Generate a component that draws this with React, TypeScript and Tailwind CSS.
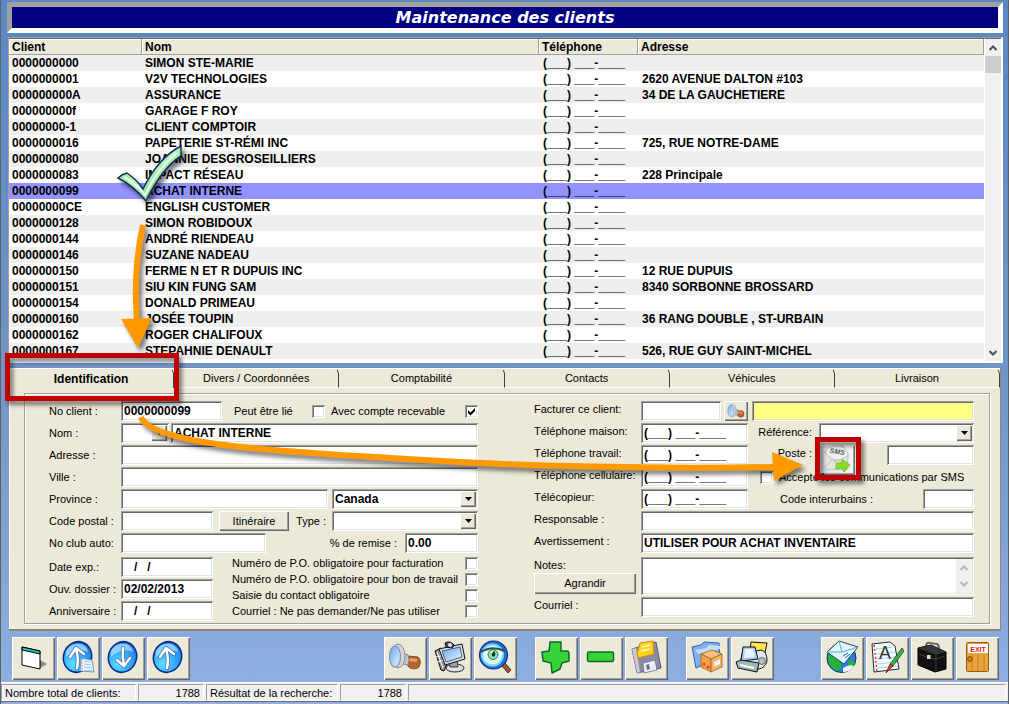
import { ReactNode } from "react";
import clsx from "clsx";

const clients = [
  ["0000000000", "SIMON STE-MARIE", ""],
  ["0000000001", "V2V TECHNOLOGIES", "2620 AVENUE DALTON #103"],
  ["000000000A", "ASSURANCE", "34 DE LA GAUCHETIERE"],
  ["000000000f", "GARAGE F ROY", ""],
  ["00000000-1", "CLIENT COMPTOIR", ""],
  ["0000000016", "PAPETERIE ST-RÉMI INC", "725, RUE NOTRE-DAME"],
  ["0000000080", "JOANNIE DESGROSEILLIERS", ""],
  ["0000000083", "IMPACT RÉSEAU", "228 Principale"],
  ["0000000099", "ACHAT INTERNE", ""],
  ["00000000CE", "ENGLISH CUSTOMER", ""],
  ["0000000128", "SIMON ROBIDOUX", ""],
  ["0000000144", "ANDRÉ RIENDEAU", ""],
  ["0000000146", "SUZANE NADEAU", ""],
  ["0000000150", "FERME N ET R DUPUIS INC", "12 RUE DUPUIS"],
  ["0000000151", "SIU KIN FUNG SAM", "8340 SORBONNE BROSSARD"],
  ["0000000154", "DONALD PRIMEAU", ""],
  ["0000000160", "JOSÉE TOUPIN", "36 RANG DOUBLE , ST-URBAIN"],
  ["0000000162", "ROGER CHALIFOUX", ""],
  ["0000000167", "STEPAHNIE DENAULT", "526, RUE GUY SAINT-MICHEL"],
];

const EMPTY_PHONE = "(___) ___-____";

const tabs = ["Identification", "Divers / Coordonnées", "Comptabilité", "Contacts", "Véhicules", "Livraison"];

const sunken =
  "shadow-[inset_1px_1px_0_#a0a0a0,inset_-1px_-1px_0_#fff,inset_2px_2px_0_#696969,inset_-2px_-2px_0_#e3e3e3]";
const bevel = "shadow-[inset_1px_1px_0_#fff,inset_-1px_-1px_0_#696969,inset_-2px_-2px_0_#a0a0a0]";
const raised = clsx("bg-[#ece9d8]", bevel);

/* ---------- form controls ---------- */

const Row = ({ children }: { children: ReactNode }) => <div className="flex h-[22px] items-start">{children}</div>;

const LeftLabel = ({ id, children }: { id: string; children: ReactNode }) => (
  <label htmlFor={id} className="w-[72px] shrink-0 whitespace-nowrap leading-5">
    {children}
  </label>
);

const RightLabel = ({ id, children }: { id: string; children: ReactNode }) => (
  <label htmlFor={id} className="w-[107px] shrink-0 whitespace-nowrap leading-4">
    {children}
  </label>
);

const TextBox = ({ id, value = "", label, className }: { id: string; value?: string; label?: string; className?: string }) => (
  <input
    id={id}
    type="text"
    aria-label={label}
    defaultValue={value}
    className={clsx("h-5 min-w-0 px-[3px] text-xs font-bold outline-none", sunken, className)}
  />
);

const SelectBox = ({ id, value = "", label, className }: { id: string; value?: string; label?: string; className?: string }) => (
  <div className={clsx("relative h-5 bg-white", sunken, className)}>
    <select
      id={id}
      aria-label={label}
      defaultValue={value}
      className="h-5 w-full appearance-none bg-transparent pl-[3px] pr-5 text-xs font-bold outline-none"
    >
      <option value={value}>{value}</option>
    </select>
    <span className={clsx("pointer-events-none absolute right-0.5 top-0.5 flex h-4 w-4 items-center justify-center", raised)}>
      <svg width="7" height="4" viewBox="0 0 7 4" aria-hidden="true">
        <path d="M0 0H7L3.5 4Z" fill="#000" />
      </svg>
    </span>
  </div>
);

const CheckBox = ({ id, checked = false, label }: { id: string; checked?: boolean; label?: string }) => (
  <span className="relative block h-[13px] w-[13px] shrink-0">
    <input
      id={id}
      type="checkbox"
      aria-label={label}
      defaultChecked={checked}
      className={clsx("peer block h-[13px] w-[13px] appearance-none bg-white", sunken)}
    />
    <svg
      viewBox="0 0 13 13"
      className="pointer-events-none absolute inset-0 hidden h-[13px] w-[13px] peer-checked:block"
      aria-hidden="true"
    >
      <path d="M3 5L5.5 7.5L10 3V6L5.5 10.5L3 8Z" fill="#000" />
    </svg>
  </span>
);

/* ---------- toolbar icons, drawn on the 43px button face ---------- */

const IconWindow = () => (
  <>
    <path d="M28 23L35 27L28 31Z" fill="#8d8a80" />
    <path d="M10 10L28 14V32L10 28Z" fill="#fff" stroke="#000" />
    <path d="M10 10L28 14V17L10 13Z" fill="#18c4c4" stroke="#000" />
  </>
);

const Ball = () => (
  <>
    <ellipse cx="20.500" cy="20" rx="14" ry="15.500" fill="url(#ball)" stroke="#0b2a86" strokeWidth="1.500" transform="rotate(20 20.500 20)" />
    <path d="M9 14Q14 5 24 7Q30 9 31 15Q20 10 9 20Z" fill="#b6e6ff" opacity=".7" />
  </>
);

const Arrow = ({ d }: { d: string }) => (
  <g fill="none" strokeLinecap="round" strokeLinejoin="round">
    <path d={d} stroke="#4a6fae" strokeWidth="4" />
    <path d={d} stroke="#fff" strokeWidth="2.500" />
  </g>
);

const IconUp = () => (
  <>
    <Ball />
    <Arrow d="M20 31Q22 22 19 12M13 20L19 11L27 17" />
  </>
);

const IconDown = () => (
  <>
    <Ball />
    <Arrow d="M21 11Q20 20 22 28M15 23L22 29L28 21" />
  </>
);

const IconUpList = () => (
  <>
    <IconUp />
    <path d="M24 21L35 23L37 35L23 34Z" fill="#eef8ff" stroke="#5a7fb4" strokeWidth=".8" />
    <path d="M27 24L34 25M27 27L34 28M27 30L35 31M27 33L35 33.500" stroke="#9cc3e4" />
    <path d="M25 22V33" stroke="#e0506a" strokeDasharray="1.500 1.500" />
  </>
);

const IconSearch = () => (
  <>
    <path d="M24 19L34 20Q38 24 35 30Q32 33 26 31L22 27Z" fill="#b5652a" stroke="#6e3713" strokeWidth=".8" />
    <path d="M26 21L33 22Q34 24 32 25L25 24Z" fill="#e3a065" />
    <path d="M18 16L24 18Q26 23 24 28L19 27Z" fill="#c3c5cc" stroke="#777a86" strokeWidth=".8" />
    <ellipse cx="14" cy="19" rx="7" ry="12" fill="#d3d5dd" stroke="#777b8c" strokeWidth=".8" />
    <ellipse cx="11" cy="19.500" rx="5.500" ry="10.500" fill="url(#lens)" stroke="#8a93ac" strokeWidth="1.200" />
  </>
);

const IconMonitor = () => (
  <>
    <ellipse cx="26" cy="31" rx="9" ry="4" fill="#dfe3e8" stroke="#222" />
    <path d="M20 25L28 23L29 30H21Z" fill="#9ca2ac" stroke="#222" strokeWidth=".8" />
    <path d="M6 14L12 11L18 27L15 34L12 33Z" fill="#8f959f" stroke="#111" />
    <path d="M8 15L14 31M7 20L12 19M9 25L14 23" stroke="#fff" />
    <path d="M10 12L33 7L36 22L16 28Z" fill="#d8dce2" stroke="#111" />
    <path d="M13 14L31 10L33 20L17 25Z" fill="url(#lens)" stroke="#33405c" strokeWidth=".8" />
    <path d="M16 6Q21 3 25 8L23 11L17 10Z" fill="#4a4f59" stroke="#111" />
    <circle cx="21" cy="8" r="2" fill="#dfe6ef" />
  </>
);

const IconEye = () => (
  <>
    <path d="M27 28L31 26L37 33L34 36Z" fill="#9a5b34" stroke="#3f1d0b" strokeWidth=".8" />
    <circle cx="19.500" cy="18" r="14" fill="#1f6fd8" stroke="#0a3390" strokeWidth="1.200" />
    <circle cx="18.500" cy="18" r="10.500" fill="#d8f7fb" stroke="#7ed6ee" strokeWidth="2" />
    <path d="M7 15Q18 8 31 14" fill="none" stroke="#3a4a4a" strokeWidth="2" />
    <path d="M9 17Q18 10 29 16Q20 27 9 17Z" fill="#fff" />
    <circle cx="19" cy="17.500" r="5" fill="#8fe0a4" stroke="#1b7a50" />
    <ellipse cx="19.500" cy="17" rx="1.800" ry="2.800" fill="#0a3b2b" />
    <circle cx="18" cy="15" r="1" fill="#fff" />
  </>
);

const IconAdd = () => (
  <path
    d="M15 5H26V14H33L34 16V24L27 26L25 32L17 36L16 26L8 24L7 15L14 14Z"
    fill="#3ad13a"
    stroke="#0b6e26"
    strokeWidth="1.500"
    strokeLinejoin="round"
  />
);

const IconRemove = () => (
  <rect x="7.500" y="15" width="26" height="9.500" rx="1.500" fill="#3ad13a" stroke="#0b6e26" strokeWidth="1.500" />
);

const IconSave = () => (
  <>
    <path d="M7 12L31 5L36 31L12 36Z" fill="#8c8ba6" stroke="#5b5a78" />
    <path d="M7 12L11 11L15 35L12 36Z" fill="#c9c9da" />
    <path d="M15 6L28 4L29 17L13 21L12 17Z" fill="#ffd21f" stroke="#d08c00" />
    <path d="M17 10L25 8M16 14L25 12" stroke="#fff6bf" strokeWidth="1.500" />
    <path d="M18 26L30 23L32 33L19 36Z" fill="#eef0f8" stroke="#6d6c88" strokeWidth=".8" />
    <path d="M21 28L24 27L25 32L22 33Z" fill="#6d6c88" />
  </>
);

const IconPackage = () => (
  <>
    <path d="M6 10L15 8L18 5L33 6L34 20L10 31Z" fill="#7fb0f0" stroke="#2f62c0" />
    <path d="M9 13L20 11L23 8L34 9V12L12 17Z" fill="#c3dcfb" />
    <path d="M15 17L26 13L36 17L25 22Z" fill="#f6c27c" stroke="#a8611c" strokeWidth=".8" />
    <path d="M15 17L25 22V35L15 30Z" fill="#f2a04c" stroke="#a8611c" strokeWidth=".8" />
    <path d="M25 22L36 17V30L25 35Z" fill="#f0b263" stroke="#a8611c" strokeWidth=".8" />
    <path d="M28 25L34 22V27L28 30Z" fill="#eaf2ff" />
    <circle cx="18" cy="27" r="1.500" fill="#e0452c" />
    <circle cx="22" cy="30" r="1.500" fill="#e0452c" />
  </>
);

const IconPrinter = () => (
  <>
    <path d="M20 5L36 6L34 16L19 14Z" fill="#ffe94a" stroke="#111" />
    <path d="M11 17L30 13Q36 14 36 24Q34 31 28 32L9 27Z" fill="#e2e8e8" stroke="#111" />
    <path d="M12 10L24 10L27 22L10 24Z" fill="#a9ccf6" stroke="#111" />
    <path d="M14 12L22 12L24 20L13 21Z" fill="#e6f2ff" />
    <path d="M5 25L10 23L28 26L26 35L7 31Z" fill="#9cb8b4" stroke="#111" />
    <path d="M9 28L23 31" stroke="#fff" strokeWidth="2" />
    <circle cx="31" cy="24" r="3.500" fill="#b4bebe" stroke="#555" strokeWidth=".8" />
  </>
);

const IconWebMail = () => (
  <>
    <circle cx="20.500" cy="21" r="14.500" fill="#2c7ad2" stroke="#0d3266" />
    <path d="M7 18Q12 14 20 26Q22 33 16 34Q6 29 7 18ZM27 24Q33 22 34 26Q30 32 27 31Z" fill="#25b13c" />
    <path d="M22 31Q28 27 33 29Q29 35 22 35Z" fill="#eaf6ff" />
    <path d="M6 15L18 4L37 10L23 27Z" fill="#dff5fa" stroke="#1a4c66" />
    <path d="M18 4L21 15L37 10M6 15L21 15" fill="none" stroke="#6aa8bd" />
    <path d="M22 19L27 16M24 21L29 17" stroke="#3f5ec0" />
  </>
);

const IconNotes = () => (
  <>
    <path d="M6 7L24 5L29 9L33 32L8 35Z" fill="#f6fcff" stroke="#1b2c3f" />
    <path d="M10 12L27 10M10 17L29 15M10 22L30 20M11 27L31 25M11 31L31 29" stroke="#a9cfea" />
    <path d="M8 8L11 34" stroke="#e03a3a" strokeWidth="1.500" strokeDasharray="2 2" />
    <text x="13" y="22" fontSize="18" fill="#333" fontFamily="Liberation Sans, sans-serif">
      A
    </text>
    <path d="M36 11L38 14L27 29L24 27Z" fill="#39b14a" stroke="#14501f" strokeWidth=".8" />
    <path d="M24 27L27 29L20 36Z" fill="#e0452c" stroke="#5a1b10" strokeWidth=".8" />
  </>
);

const IconBriefcase = () => (
  <>
    <path d="M15 9Q15 5 19 6L26 7Q28 8 28 12" fill="none" stroke="#6a675f" strokeWidth="2" />
    <path d="M7 11L20 8L35 15V32L24 35L7 28Z" fill="#111" stroke="#000" />
    <path d="M7 11L20 8L35 15L25 18Z" fill="#34363c" />
    <path d="M25 18V34M8 17L18 21L25 22L34 19" fill="none" stroke="#3f4148" />
    <rect x="16" y="18" width="3.500" height="4" fill="#e6ddb0" />
  </>
);

const IconExit = () => (
  <>
    <rect x="10.500" y="5.500" width="22" height="29" rx="1" fill="#e8a33c" stroke="#9a5a10" />
    <path d="M16 18V34M22 18V34M28 18V34" stroke="#c67f22" />
    <rect x="12" y="7" width="20" height="9" fill="#fff" />
    <text x="22" y="14.500" fontSize="7" fontWeight="bold" textAnchor="middle" fill="#e01818" fontFamily="Liberation Sans, sans-serif">
      EXIT
    </text>
    <circle cx="14" cy="22" r="2.500" fill="#c97a1e" stroke="#7c430a" strokeWidth=".8" />
  </>
);

const SmsIcon = () => (
  <svg viewBox="0 0 36 30" className="h-[30px] w-9" aria-hidden="true">
    <path d="M5 6L13 1L24 0L30 9L28 25L4 24Z" fill="#cfcfcd" />
    <ellipse cx="18" cy="8" rx="11" ry="7" fill="#f0f0ee" stroke="#c4c4c2" strokeWidth=".8" transform="rotate(8 18 8)" />
    <path d="M4 6L16 17L29 11L28 25L4 24Z" fill="#e4e4e2" stroke="#bcbcba" strokeWidth=".8" />
    <path d="M4 24L13 15M28 25L20 15" stroke="#c6c6c4" />
    <text x="18" y="9" fontSize="7" fontWeight="bold" fontStyle="italic" textAnchor="middle" fill="#555" transform="rotate(10 18 8)" fontFamily="Liberation Sans, sans-serif">
      SMS
    </text>
    <path d="M17 18L23 18L23 14L31 20L25 27L23 23L17 24Z" fill="#8edb2c" stroke="#6cbd1a" strokeWidth=".8" />
  </svg>
);

const toolbar: { label: string; icon: ReactNode }[][] = [
  [
    { label: "Fenêtre", icon: <IconWindow /> },
    { label: "Premier", icon: <IconUpList /> },
    { label: "Suivant", icon: <IconDown /> },
    { label: "Précédent", icon: <IconUp /> },
  ],
  [
    { label: "Rechercher", icon: <IconSearch /> },
    { label: "Poste", icon: <IconMonitor /> },
    { label: "Visualiser", icon: <IconEye /> },
  ],
  [
    { label: "Ajouter", icon: <IconAdd /> },
    { label: "Supprimer", icon: <IconRemove /> },
    { label: "Enregistrer", icon: <IconSave /> },
  ],
  [
    { label: "Dossiers", icon: <IconPackage /> },
    { label: "Imprimer", icon: <IconPrinter /> },
  ],
  [
    { label: "Courriel", icon: <IconWebMail /> },
    { label: "Notes", icon: <IconNotes /> },
    { label: "Affaires", icon: <IconBriefcase /> },
    { label: "Quitter", icon: <IconExit /> },
  ],
];

/* ---------- page sections ---------- */

const Chevron = ({ up = false, color }: { up?: boolean; color: string }) => (
  <svg width="8" height="6" viewBox="0 0 8 6" aria-hidden="true">
    <path d={up ? "M0.500 5L4 1.500L7.500 5" : "M0.500 1L4 4.500L7.500 1"} fill="none" stroke={color} strokeWidth="2" />
  </svg>
);

const ClientList = () => (
  <section className="ml-px mt-1 flex border-l border-t border-[#a0a0a0] border-r-2 border-b-2 border-r-white border-b-white bg-white">
    <div className="flex-1 border-t border-[#696969] pb-0.5">
      <table className="w-full table-fixed border-collapse text-left text-xs font-bold leading-4">
        <colgroup>
          <col className="w-[133px]" />
          <col className="w-[397px]" />
          <col className="w-[99px]" />
          <col />
        </colgroup>
        <thead>
          <tr className="bg-[#ece9d8]">
            {["Client", "Nom", "Téléphone", "Adresse"].map((title) => (
              <th key={title} className="h-4 p-0 pl-[3px] shadow-[inset_-1px_-1px_0_#a0a0a0,inset_1px_1px_0_#fff]">
                {title}
              </th>
            ))}
          </tr>
        </thead>
        <tbody>
          {clients.map(([code, name, address]) => (
            <tr key={code} className={code === "0000000099" ? "bg-[#9393ff]" : "odd:bg-[#efefef] even:bg-white"}>
              <td className="h-4 p-0 pl-[3px]">{code}</td>
              <td className="h-4 p-0 pl-[3px]">{name}</td>
              <td className="h-4 p-0 pl-1">{EMPTY_PHONE}</td>
              <td className="h-4 p-0 pl-1">{address}</td>
            </tr>
          ))}
        </tbody>
      </table>
    </div>
    <div className="flex w-[17px] flex-col items-center border-l border-t border-l-white border-t-[#696969] bg-[#f0f0f0]">
      <div className="flex h-[17px] items-center">
        <Chevron up color="#505050" />
      </div>
      <div className="h-[17px] w-full bg-[#cdcdcd]" />
      <div className="mt-auto flex h-[17px] items-center">
        <Chevron color="#505050" />
      </div>
    </div>
  </section>
);

const LeftForm = () => (
  <div>
    <Row>
      <LeftLabel id="no-client">No client :</LeftLabel>
      <TextBox id="no-client" value="0000000099" className="w-[101px] bg-white" />
      <label htmlFor="lie" className="ml-3 leading-5">
        Peut être lié
      </label>
      <div className="ml-auto flex items-center gap-1.5 pt-0.5">
        <CheckBox id="lie" />
        <label htmlFor="recevable" className="w-32 leading-4">
          Avec compte recevable
        </label>
        <CheckBox id="recevable" checked />
      </div>
    </Row>
    <Row>
      <LeftLabel id="nom">Nom :</LeftLabel>
      <SelectBox id="titre" label="Titre" className="mr-0.5 w-12" />
      <TextBox id="nom" value="ACHAT INTERNE" className="flex-1 bg-white" />
    </Row>
    <Row>
      <LeftLabel id="adresse">Adresse :</LeftLabel>
      <TextBox id="adresse" className="flex-1 bg-white" />
    </Row>
    <Row>
      <LeftLabel id="ville">Ville :</LeftLabel>
      <TextBox id="ville" className="flex-1 bg-white" />
    </Row>
    <Row>
      <LeftLabel id="province">Province :</LeftLabel>
      <TextBox id="province" className="flex-1 bg-white" />
      <SelectBox id="pays" label="Pays" value="Canada" className="ml-1 w-[146px]" />
    </Row>
    <Row>
      <LeftLabel id="code-postal">Code postal :</LeftLabel>
      <TextBox id="code-postal" className="w-[92px] bg-white" />
      <button type="button" className={clsx("ml-1.5 h-5 w-[70px]", raised)}>
        Itinéraire
      </button>
      <label htmlFor="type" className="ml-auto mr-1.5 leading-5">
        Type :
      </label>
      <SelectBox id="type" className="w-[146px]" />
    </Row>
    <Row>
      <LeftLabel id="club">No club auto:</LeftLabel>
      <TextBox id="club" className="w-[145px] bg-white" />
      <label htmlFor="remise" className="ml-auto mr-2 leading-5">
        % de remise :
      </label>
      <TextBox id="remise" value="0.00" className="w-[73px] bg-white" />
    </Row>
    <div className="flex">
      <div className="pt-0.5">
        <Row>
          <LeftLabel id="date-exp">Date exp.:</LeftLabel>
          <TextBox id="date-exp" value="   /   /" className="w-[92px] bg-white" />
        </Row>
        <Row>
          <LeftLabel id="ouverture">Ouv. dossier :</LeftLabel>
          <TextBox id="ouverture" value="02/02/2013" className="w-[92px] bg-white" />
        </Row>
        <Row>
          <LeftLabel id="anniversaire">Anniversaire :</LeftLabel>
          <TextBox id="anniversaire" value="   /   /" className="w-[92px] bg-white" />
        </Row>
      </div>
      <div className="ml-[19px] flex-1 leading-4">
        {[
          ["po-fact", "Numéro de P.O. obligatoire pour facturation"],
          ["po-bon", "Numéro de P.O. obligatoire pour bon de travail"],
          ["contact", "Saisie du contact obligatoire"],
          ["sans-courriel", "Courriel : Ne pas demander/Ne pas utiliser"],
        ].map(([id, text]) => (
          <div key={id} className="flex h-4 items-center justify-between whitespace-nowrap">
            <label htmlFor={id}>{text}</label>
            <CheckBox id={id} />
          </div>
        ))}
      </div>
    </div>
  </div>
);

const RightForm = () => (
  <div>
    <Row>
      <RightLabel id="facturer">Facturer ce client:</RightLabel>
      <TextBox id="facturer" className="w-20 bg-white" />
      <button type="button" aria-label="Chercher un client" className={clsx("ml-[3px] flex h-5 w-6 items-center justify-center", raised)}>
        <svg viewBox="4 5 34 30" className="h-4 w-[18px]" aria-hidden="true">
          <IconSearch />
        </svg>
      </button>
      <TextBox id="facturer-nom" label="Nom du client facturé" className="ml-1 flex-1 bg-[#ffff80]" />
    </Row>
    <Row>
      <RightLabel id="tel-maison">Téléphone maison:</RightLabel>
      <TextBox id="tel-maison" value={EMPTY_PHONE} className="w-[107px] bg-white" />
      <label htmlFor="reference" className="w-16 text-right leading-[18px]">
        Référence:
      </label>
      <SelectBox id="reference" className="ml-[7px] flex-1" />
    </Row>
    <Row>
      <RightLabel id="tel-travail">Téléphone travail:</RightLabel>
      <TextBox id="tel-travail" value={EMPTY_PHONE} className="w-[107px] bg-white" />
      <label htmlFor="poste" className="w-16 text-right leading-4">
        Poste :
      </label>
      <button
        type="button"
        aria-label="Envoyer un SMS"
        className={clsx("ml-[7px] h-[30px] w-9 shrink-0 bg-linear-to-r from-[#dcdcdc] to-[#f6f6f6]", bevel)}
      >
        <SmsIcon />
      </button>
      <TextBox id="poste" className="ml-auto w-[87px] bg-white" />
    </Row>
    <Row>
      <RightLabel id="tel-cell">Téléphone cellulaire:</RightLabel>
      <TextBox id="tel-cell" value={EMPTY_PHONE} className="w-[107px] bg-white" />
      <div className="ml-3 flex items-center gap-1.5 whitespace-nowrap pt-0.5">
        <CheckBox id="accepte-sms" />
        <label htmlFor="accepte-sms" className="leading-4">
          Accepte les communications par SMS
        </label>
      </div>
    </Row>
    <Row>
      <RightLabel id="telecopieur">Télécopieur:</RightLabel>
      <TextBox id="telecopieur" value={EMPTY_PHONE} className="w-[107px] bg-white" />
      <label htmlFor="interurbains" className="ml-8 leading-5">
        Code interurbains :
      </label>
      <TextBox id="interurbains" className="ml-auto w-[51px] bg-white" />
    </Row>
    <Row>
      <RightLabel id="responsable">Responsable :</RightLabel>
      <TextBox id="responsable" className="flex-1 bg-white" />
    </Row>
    <Row>
      <RightLabel id="avertissement">Avertissement :</RightLabel>
      <TextBox id="avertissement" value="UTILISER POUR ACHAT INVENTAIRE" className="flex-1 bg-white" />
    </Row>
    <div className="mt-0.5 flex h-[38px]">
      <div className="w-[107px]">
        <label htmlFor="notes" className="block leading-4">
          Notes:
        </label>
        <button type="button" className={clsx("h-[21px] w-[102px]", raised)}>
          Agrandir
        </button>
      </div>
      <div className={clsx("flex flex-1 bg-white p-0.5", sunken)}>
        <textarea id="notes" className="min-w-0 flex-1 resize-none bg-transparent px-px text-xs font-bold outline-none" />
        <div className="flex w-4 flex-col items-center justify-between bg-[#f0f0f0] py-1.5">
          <Chevron up color="#b8b8b8" />
          <Chevron color="#b8b8b8" />
        </div>
      </div>
    </div>
    <div className="mt-0.5 flex">
      <RightLabel id="courriel">Courriel :</RightLabel>
      <TextBox id="courriel" className="flex-1 bg-white" />
    </div>
  </div>
);

/* Callouts that walk the reader from the list to the SMS button */
const Annotations = () => (
  <svg
    className="pointer-events-none absolute left-0 top-0 h-[704px] w-[1009px] drop-shadow-[3px_4px_2px_rgba(0,0,0,0.5)]"
    viewBox="1 0 1009 704"
    aria-hidden="true"
  >
    <defs>
      <linearGradient id="tick" x1="0" y1="0" x2="1" y2="1">
        <stop offset="0" stopColor="#6fe76f" />
        <stop offset=".5" stopColor="#b6f5b6" />
        <stop offset="1" stopColor="#3cb043" />
      </linearGradient>
    </defs>
    <path
      d="M118 178Q122 174 127 173Q137 180 143 189Q158 158 181 146V156Q162 168 146 201Q134 186 118 178Z"
      fill="url(#tick)"
      stroke="#12306a"
      strokeWidth="1.500"
    />
    <path d="M124 177Q136 183 145 195Q158 168 177 153" fill="none" stroke="#f4fff4" strokeWidth="2" />
    <g fill="none" stroke="#ff9900" strokeWidth="6">
      <path d="M143 225Q133 270 137 322" />
      <path d="M141 417C152 447 300 452 407 459S640 469 776 467" />
    </g>
    <path d="M121 319L152 318L138 348Z" fill="#ff9900" />
    <path d="M772 452L803 465L774 481Z" fill="#ff9900" />
    <g fill="none" stroke="#c00000" strokeWidth="5">
      <rect x="7.500" y="355.500" width="169" height="43" />
      <rect x="817.500" y="439.500" width="41" height="38" />
    </g>
  </svg>
);

const StatusCell = ({ className, children }: { className?: string; children?: ReactNode }) => (
  <div
    className={clsx(
      "h-[17px] border border-b-white border-l-[#a0a0a0] border-r-white border-t-[#a0a0a0] px-[3px] leading-4",
      className,
    )}
  >
    {children}
  </div>
);

const App = () => {
  return (
    <div className="relative min-h-screen overflow-hidden border-x border-[#5a6270] bg-linear-to-b from-[#5b88c3] via-[#7193c3] to-[#8fb0e0] font-['Liberation_Sans',Arial,sans-serif] text-[11px] text-black">
      <svg className="absolute h-0 w-0" aria-hidden="true">
        <defs>
          <radialGradient id="ball" cx=".45" cy=".75" r=".8">
            <stop offset="0" stopColor="#5fe0ff" />
            <stop offset=".6" stopColor="#2ea0f8" />
            <stop offset="1" stopColor="#1c6fdc" />
          </radialGradient>
          <linearGradient id="lens" x1="0" y1="0" x2="1" y2="1">
            <stop offset="0" stopColor="#5fa8ee" />
            <stop offset="1" stopColor="#eaf6ff" />
          </linearGradient>
        </defs>
      </svg>

      <main className="pb-0.5 pl-1.5 pr-[5px] pt-0.5">
        <h1 className="h-[31px] border-[5px] border-b-white border-l-[#a0a0a0] border-r-white border-t-[#a0a0a0] bg-[#000080] text-center font-['DejaVu_Sans',Verdana,sans-serif] text-base font-bold italic leading-[22px] text-white">
          Maintenance des clients
        </h1>

        <ClientList />

        <section className="ml-0.5 mr-0.5 mt-[5px] border-b-2 border-r border-[#8a887c] bg-[#ece9d8] pb-[5px] shadow-[inset_1px_1px_0_#fff]">
          <div className="flex h-5" role="tablist">
            {tabs.map((tab, i) => (
              <button
                key={tab}
                type="button"
                role="tab"
                aria-selected={i === 0}
                className={clsx(
                  "h-5 flex-1 rounded-t-md border-r border-t border-r-[#404040] border-t-white",
                  i === 0 ? "text-xs font-bold" : "border-b border-b-white",
                )}
              >
                {tab}
              </button>
            ))}
          </div>
          <form className="ml-[15px] mr-2.5 mt-[5px] grid grid-cols-[429fr_440fr] gap-x-14 border border-[#a0a0a0] pl-6 pr-[15px] pt-[7px] shadow-[1px_1px_0_#fff,inset_1px_1px_0_#fff]">
            <LeftForm />
            <RightForm />
          </form>
        </section>

        <nav className="mt-1.5 flex gap-[18px] pl-[5px] pr-1">
          {toolbar.map((group, i) => (
            <div key={i} className={clsx("flex gap-0.5", i === 0 && "mr-auto", i === 4 && "ml-[29px]")}>
              {group.map(({ label, icon }) => (
                <button key={label} type="button" aria-label={label} className={clsx("h-[43px] w-[43px]", raised)}>
                  <svg viewBox="0 0 43 43" className="h-[43px] w-[43px]" aria-hidden="true">
                    {icon}
                  </svg>
                </button>
              ))}
            </div>
          ))}
        </nav>
      </main>

      <footer className="flex gap-0.5 border-b border-t border-b-[#696969] border-t-white bg-[#f0f0f0] pr-0.5 pt-px">
        <StatusCell className="w-[135px]">Nombre total de clients:</StatusCell>
        <StatusCell className="w-[66px] text-right">1788</StatusCell>
        <StatusCell className="w-[132px]">Résultat de la recherche:</StatusCell>
        <StatusCell className="w-[66px] text-right">1788</StatusCell>
        <StatusCell className="flex-1" />
      </footer>

      <Annotations />
    </div>
  );
};

export default App;
